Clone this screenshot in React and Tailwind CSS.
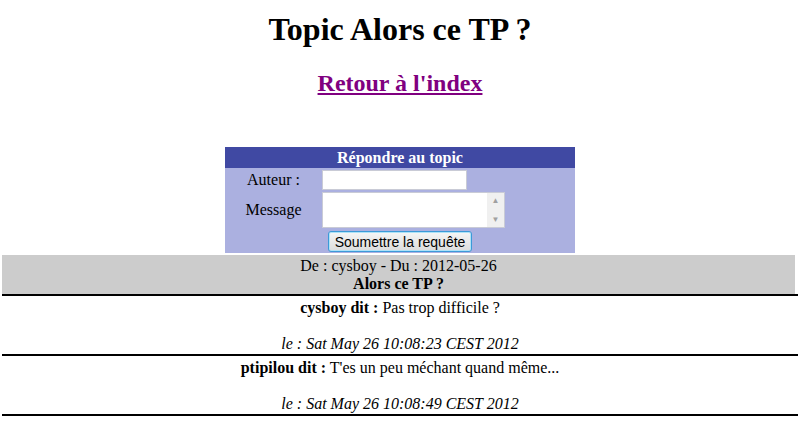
function ReplyForm() {
  return (
    <div className="mx-auto mt-[50px] w-[350px] font-['Liberation_Serif',serif] text-[16px] text-black">
      <div className="h-[21px] bg-[#4049a3] text-center font-bold leading-[21px] text-white">
        Répondre au topic
      </div>
      <div className="bg-[#abb0e0] pt-[2px] pb-[1px]">
        <div className="grid grid-cols-[97px_1fr] items-center">
          <label className="text-center leading-[20px]">Auteur :</label>
          <input
            type="text"
            className="h-[20px] w-[145px] border border-[#c9cbd6] bg-white px-1 text-[13px] outline-none"
          />
        </div>
        <div className="mt-[2px] grid grid-cols-[97px_1fr] items-center">
          <label className="text-center leading-[20px]">Message</label>
          <div className="flex h-[36px] w-[183px] border border-[#c9cbd6] bg-white">
            <textarea className="h-full flex-1 resize-none bg-white outline-none" />
            <div className="flex w-[17px] flex-col items-center justify-between bg-[#f0f0f0] py-[3px] text-[8px] leading-[9px] text-[#a0a0a0]">
              <span>▲</span>
              <span>▼</span>
            </div>
          </div>
        </div>
        <div className="mt-[3px] flex justify-center">
          <button className="h-[21px] w-[144px] rounded-[3px] border border-[#3c9ad8] bg-gradient-to-b from-[#f6f6f6] to-[#dcdcdc] font-['Liberation_Sans',sans-serif] text-[14px] leading-[18px] text-black shadow-[inset_0_0_0_1px_#aee2f7]">
            Soumettre la requête
          </button>
        </div>
      </div>
    </div>
  );
}

function Post({ author, text, date }) {
  return (
    <div className="border-t-2 border-black pt-[3px] pb-[1px] text-center leading-[18px]">
      <div>
        <b>{author} dit :</b> {text}
      </div>
      <div className="h-[18px]" />
      <div className="italic">le : {date}</div>
    </div>
  );
}

export default function App() {
  return (
    <div className="min-h-[429px] bg-white font-['Liberation_Serif',serif] text-[16px] text-black">
      <div className="ml-[2px] w-[796px]">
        <h1 className="pt-[11px] text-center text-[32px] font-bold leading-[37px]">
          Topic Alors ce TP ?
        </h1>
        <h2 className="mt-[21px] text-center text-[24px] font-bold leading-[28px]">
          <a href="#" className="text-[#800080] underline">
            Retour à l'index
          </a>
        </h2>

        <ReplyForm />

        <div className="mt-[2px] w-[793px] bg-[#cccccc] pt-[2px] pb-[1px] text-center leading-[18px]">
          <div>De : cysboy - Du : 2012-05-26</div>
          <div className="font-bold">Alors ce TP ?</div>
        </div>

        <div className="border-b-2 border-black">
          <Post author="cysboy" text="Pas trop difficile ?" date="Sat May 26 10:08:23 CEST 2012" />
          <Post author="ptipilou" text="T'es un peu méchant quand même..." date="Sat May 26 10:08:49 CEST 2012" />
        </div>
      </div>
    </div>
  );
}
